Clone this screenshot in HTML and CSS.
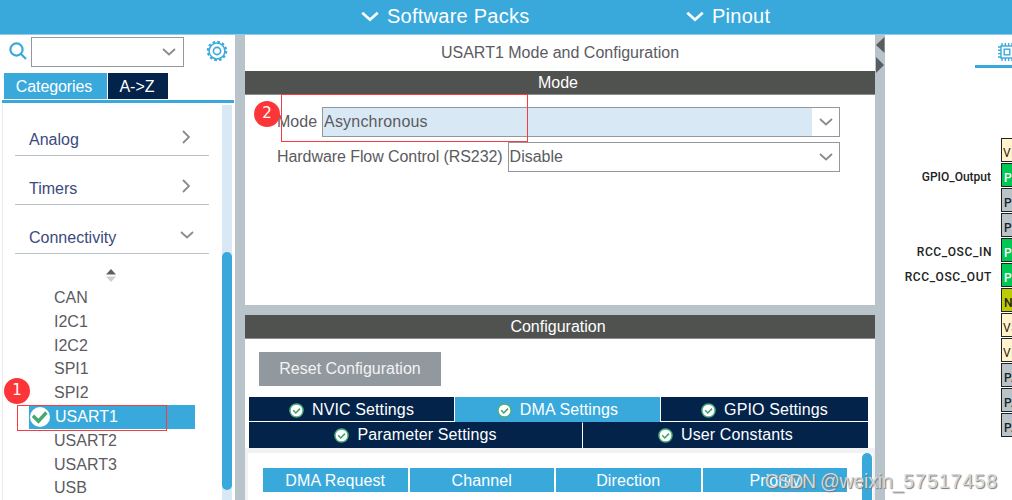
FILE: index.html
```html
<!DOCTYPE html>
<html lang="en">
<head>
  <meta charset="UTF-8" />
  <title>Pinout &amp; Configuration</title>
  <link rel="stylesheet" href="styles.css">
</head>

<body>
  <!-- shared icons -->
  <svg width="0" height="0" class="defs">
    <symbol id="down" viewBox="0 0 14 8"><path d="M1 1l6 5.5L13 1" fill="none" stroke="currentColor"/></symbol>
    <symbol id="right" viewBox="0 0 8 14"><path d="M1 1l6 6-6 6" fill="none" stroke="currentColor"/></symbol>
    <symbol id="ok" viewBox="0 0 16 16">
      <circle cx="8" cy="8" r="7" fill="#fff" stroke="#4fae7b" stroke-width="1.5"/>
      <path d="M4.5 7.8l2.7 2.8 4.5-4.6" fill="none" stroke="#3fa46c" stroke-width="1.7"/>
    </symbol>
  </svg>

  <div class="topbar">
    <span class="menu packs"><svg class="caret"><use href="#down"/></svg>Software Packs</span>
    <span class="menu pinout"><svg class="caret"><use href="#down"/></svg>Pinout</span>
  </div>

  <div class="workspace">
    <!-- Categories -->
    <div class="sidebar">
      <div class="search">
        <svg class="lens" viewBox="0 0 18 18"><circle cx="7.5" cy="7.5" r="6.1"/><path d="M12 12l5 5"/></svg>
        <div class="select"><svg class="arrow"><use href="#down"/></svg></div>
        <svg class="gear" viewBox="0 0 22 22">
          <circle cx="11" cy="11" r="9.2" stroke-width="2" stroke-dasharray="2.7 2.117"/>
          <circle cx="11" cy="11" r="7.9" stroke-width="1.5"/>
          <circle cx="11" cy="11" r="3.6" stroke-width="1.6"/>
        </svg>
      </div>
      <div class="side-tabs">
        <span class="side-tab on">Categories</span>
        <span class="side-tab">A-&gt;Z</span>
      </div>
      <div class="side-body">
        <div class="tree">
          <div class="group">Analog<svg class="chev-r"><use href="#right"/></svg></div>
          <div class="group">Timers<svg class="chev-r"><use href="#right"/></svg></div>
          <div class="group">Connectivity<svg class="arrow"><use href="#down"/></svg></div>
          <svg class="sorter" viewBox="0 0 10 13"><path d="M5 0l5 5.5H0z" fill="#5f5f5f"/><path d="M5 13l5-5.5H0z" fill="#cfcfcf"/></svg>
          <ul class="items">
            <li>CAN</li>
            <li>I2C1</li>
            <li>I2C2</li>
            <li>SPI1</li>
            <li>SPI2</li>
            <li class="on"><svg class="tick" viewBox="0 0 20 20"><circle cx="10" cy="10" r="10" fill="#fff"/><path d="M3 8.8l5.4 5.4 8-8.7" fill="none" stroke="#45a873" stroke-width="3.4"/></svg>USART1</li>
            <li>USART2</li>
            <li>USART3</li>
            <li>USB</li>
          </ul>
        </div>
        <div class="scroll"><div class="thumb"></div></div>
      </div>
    </div>

    <div class="splitter"></div>

    <!-- Mode and configuration -->
    <div class="center">
      <div class="title">USART1 Mode and Configuration</div>
      <div class="bar">Mode</div>
      <div class="mode">
        <div class="field">
          <label>Mode</label>
          <div class="select"><span class="value hl">Asynchronous</span><svg class="arrow"><use href="#down"/></svg></div>
        </div>
        <div class="field">
          <label class="flow">Hardware Flow Control (RS232)</label>
          <div class="select"><span class="value">Disable</span><svg class="arrow"><use href="#down"/></svg></div>
        </div>
      </div>
      <div class="bar">Configuration</div>
      <div class="config">
        <div class="reset">Reset Configuration</div>
        <div class="tabs top">
          <span><svg><use href="#ok"/></svg>NVIC Settings</span>
          <span class="on"><svg><use href="#ok"/></svg>DMA Settings</span>
          <span><svg><use href="#ok"/></svg>GPIO Settings</span>
        </div>
        <div class="tabs bottom">
          <span><svg><use href="#ok"/></svg>Parameter Settings</span>
          <span><svg><use href="#ok"/></svg>User Constants</span>
        </div>
        <div class="dma">
          <div class="heads">
            <span>DMA Request</span>
            <span>Channel</span>
            <span>Direction</span>
            <span>Priority</span>
          </div>
          <div class="dma-thumb"></div>
        </div>
      </div>
    </div>

    <div class="splitter">
      <svg viewBox="0 0 10 40"><path d="M9.5 2v16L1 10zM1 22v16l8-8z" fill="#5a5c5e"/></svg>
    </div>

    <!-- Pinout view -->
    <div class="chip">
      <div class="chip-tab">
        <svg viewBox="0 0 20 20">
          <rect x="4" y="4" width="12" height="12"/>
          <rect x="7.2" y="7.2" width="5.6" height="5.6"/>
          <path d="M5 1v3M8.3 1v3M11.6 1v3M15 1v3M5 16v3M8.3 16v3M11.6 16v3M15 16v3M1 5h3M1 8.3h3M1 11.6h3M1 15h3M16 5h3M16 8.3h3M16 11.6h3M16 15h3"/>
        </svg>
      </div>
      <div class="pins">
        <div class="pin power"><b>VBAT</b></div>
        <div class="pin used"><i class="gpio">GPIO_Output</i><b>PC13</b></div>
        <div class="pin"><b>PC14</b></div>
        <div class="pin"><b>PC15</b></div>
        <div class="pin used"><i>RCC_OSC_IN</i><b>PD0</b></div>
        <div class="pin used"><i>RCC_OSC_OUT</i><b>PD1</b></div>
        <div class="pin reset-pin"><b>NRST</b></div>
        <div class="pin power"><b>VSSA</b></div>
        <div class="pin power"><b>VDDA</b></div>
        <div class="pin"><b>PA0</b></div>
        <div class="pin"><b>PA1</b></div>
        <div class="pin"><b>PA2</b></div>
      </div>
    </div>
  </div>

  <!-- Step markers -->
  <div class="frame f1"></div>
  <div class="frame f2"></div>
  <div class="step s1">1</div>
  <div class="step s2">2</div>
  <div class="watermark"><span class="site">CSDN</span> @weixin_<span class="uid">57517458</span></div>
</body>
</html>
```
FILE: styles.css
```css
* { box-sizing: border-box; }

body {
  margin: 0;
  width: 1012px;
  height: 500px;
  position: relative;
  overflow: hidden;
  display: flex;
  flex-direction: column;
  background: #fff;
  font: 16px/20px "Liberation Sans", Arial, sans-serif;
  color: #5b5b5f;
}
svg { display: block; flex: none; }
.defs { position: absolute; }

/* ---------- Top bar ---------- */
.topbar {
  flex: none;
  height: 35px;
  background: #39a9dc;
  border-bottom: 1px solid #8fcfec;
  display: flex;
  padding-left: 361px;
  color: #fff;
  font-size: 20px;
  line-height: 32px;
  letter-spacing: 0.25px;
}
.menu { display: flex; align-items: center; gap: 8px; height: 32px; }
.packs { width: 325px; }
.caret { width: 18px; height: 11px; stroke-width: 2.1; }

.workspace { flex: 1; min-height: 0; display: flex; }

/* ---------- Sidebar ---------- */
.sidebar {
  width: 235px;
  flex: none;
  display: flex;
  flex-direction: column;
}
.search {
  height: 38px;
  flex: none;
  display: flex;
  align-items: flex-start;
  padding: 2px 0 0 9px;
}
.lens {
  width: 18px;
  height: 18px;
  margin: 5px 4px 0 0;
  fill: none;
  stroke: #39a9dc;
  stroke-width: 2.2;
}
.select {
  border: 1px solid #92989d;
  background: #fff;
  display: flex;
  align-items: center;
  height: 30px;
}
.search .select { width: 153px; justify-content: flex-end; padding-right: 7px; }
.arrow { width: 14px; height: 8px; color: #8b8b8b; stroke-width: 1.8; }
.gear { width: 22px; height: 22px; margin: 3px 0 0 22px; fill: none; stroke: #39a9dc; }

.side-tabs { display: flex; gap: 1px; padding-left: 4px; height: 27px; flex: none; }
.side-tab {
  width: 60px;
  height: 26px;
  background: #03234b;
  color: #fff;
  line-height: 27px;
  padding-right: 2px;
  text-align: center;
}
.side-tab.on { width: 103px; padding-right: 3px; background: #39a9dc; letter-spacing: -0.1px; }
.side-body {
  flex: 1;
  min-height: 0;
  margin: 0 1px 0 2px;
  border-top: 3px solid #39a9dc;
  display: flex;
  justify-content: space-between;
}
.side-body::before { content: ""; width: 1px; background: #e8ebef; }
.tree { width: 194px; margin-left: 12px; padding-top: 4px; margin-right: auto; }
.group {
  height: 49px;
  border-bottom: 1px solid #b9c4ca;
  padding: 17px 15px 0 14px;
  display: flex;
  justify-content: space-between;
  align-items: center;
  color: #3b4a7e;
}
.group svg { margin-top: -5px; }
.chev-r { width: 8px; height: 14px; margin-right: 4px; color: #8b8b8b; stroke-width: 1.8; }
.sorter { width: 10px; height: 13px; margin: 15px 0 4px 91px; }
.items { list-style: none; margin: 0 14px; padding: 0; }
.items li { height: 23.8px; line-height: 24px; padding-left: 25px; }
.items .on {
  display: flex;
  align-items: center;
  gap: 5px;
  padding-left: 1px;
  background: #39a9dc;
  color: #fff;
}
.tick { width: 20px; height: 20px; }
.scroll { width: 10px; margin: 2px 2px 0 0; padding-top: 147px; background: #d9e8f5; }
.thumb { height: 238px; border-radius: 5px; background: #39a9dc; }

.splitter { width: 10px; flex: none; background: #b9c4ca; }
.splitter svg { width: 10px; height: 40px; }

/* ---------- Center ---------- */
.center { width: 630px; flex: none; display: flex; flex-direction: column; }
.title { height: 36px; line-height: 36px; text-align: center; flex: none; }
.bar {
  height: 24px;
  line-height: 24px;
  flex: none;
  background: #505250;
  border-bottom: 1px solid #8b8d8c;
  color: #fff;
  text-align: center;
  padding-right: 4px;
}
.mode {
  height: 220px;
  flex: none;
  border-bottom: 10px solid #b9c4ca;
  padding: 12px 35px 0 32px;
}
.field { display: flex; align-items: center; gap: 5px; margin-bottom: 5px; }
.flow { letter-spacing: -0.07px; }
.field .select { flex: 1; padding-right: 6px; }
.value { flex: 1; line-height: 28px; padding-left: 1px; margin-right: 7px; }
.hl { background: #d9e8f5; letter-spacing: 0.2px; }

.config { flex: 1; min-height: 0; padding-top: 13px; display: flex; flex-direction: column; }
.reset {
  width: 182px;
  height: 34px;
  margin: 0 0 11px 14px;
  background: #91989e;
  color: #f1f3f4;
  text-align: center;
  line-height: 34px;
  flex: none;
}
.tabs { display: flex; gap: 1px; padding: 0 7px 0 4px; flex: none; }
.tabs span {
  height: 24px;
  padding-top: 2px;
  display: flex;
  align-items: center;
  justify-content: center;
  gap: 8px;
  background: #03234b;
  color: #fff;
  letter-spacing: 0.12px;
}
.tabs svg { width: 15px; height: 15px; }
.top span { width: 205px; }
.top span:last-child { width: 207px; }
.tabs .on { background: #39a9dc; height: 26px; padding-bottom: 2px; }
.bottom { margin-top: -1px; }
.bottom span { width: 333px; height: 26px; padding-top: 0; }
.bottom span:last-child { width: 285px; }
.dma {
  flex: 1;
  border: solid #f0f2f4;
  border-width: 5px 2px 0 3px;
  display: flex;
  justify-content: space-between;
}
.heads { display: flex; gap: 2px; padding: 15px 0 0 15px; }
.heads span {
  width: 144.5px;
  height: 24px;
  line-height: 25px;
  background: #39a9dc;
  color: #fff;
  text-align: center;
  letter-spacing: 0.1px;
}
.dma-thumb { width: 10px; margin-right: 1px; background: #39a9dc; border-radius: 5px 5px 0 0; }

/* ---------- Pinout ---------- */
.chip { flex: 1; min-width: 0; overflow: hidden; }
.chip-tab {
  width: 60px;
  height: 33px;
  margin-left: 90px;
  padding: 7px 0 0 22px;
  border-bottom: 3px solid #39a9dc;
}
.chip-tab svg { width: 20px; height: 20px; fill: none; stroke: #39a9dc; stroke-width: 1.4; }
.pins { width: 146px; padding-top: 70px; }
.pin {
  height: 25px;
  display: flex;
  justify-content: flex-end;
  font: 500 12px/29px Roboto, sans-serif;
  letter-spacing: 0.6px;
  color: #222;
}
.pin i { font-style: normal; margin-right: 9px; }
.pin .gpio { letter-spacing: 0; margin-right: 10px; }
.pin b {
  width: 30px;
  height: 24px;
  border: 1px solid #222;
  background: #b9c4ca;
  font-weight: 500;
  padding-left: 2px;
}
.used b { background: #00c853; color: #fff; }
.power b { background: #fff4cc; font-weight: 400; padding-left: 1px; }
.reset-pin b { background: #bbcc00; }

/* ---------- Step markers ---------- */
.frame { position: absolute; border: 1px solid #fb3a3d; }
.f1 { left: 17px; top: 405px; width: 150px; height: 26px; }
.f2 { left: 281px; top: 94px; width: 247px; height: 48px; }
.step {
  position: absolute;
  width: 26px;
  height: 26px;
  border-radius: 50%;
  background: #fb3538;
  color: #fff;
  text-align: center;
  font: 15px/25px "DejaVu Sans", sans-serif;
}
.s1 { left: 4px; top: 378px; }
.s2 { left: 254px; top: 101px; }
.watermark {
  position: absolute;
  right: 14px;
  top: 470px;
  font-size: 19.5px;
  line-height: 22px;
  color: #d4d7d9;
  white-space: nowrap;
  letter-spacing: -0.2px;
  text-shadow: 1px 1px 1px #777;
}
.site { letter-spacing: -1.3px; }
.uid { letter-spacing: 1px; }
```
